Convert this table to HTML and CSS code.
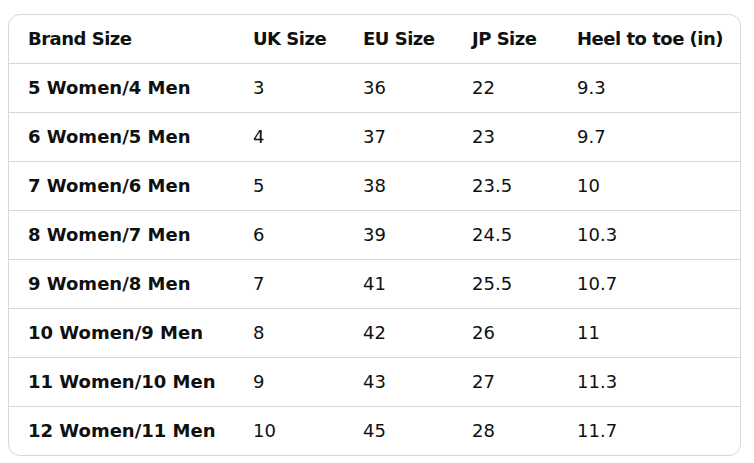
FILE: index.html
```html
<!DOCTYPE html>
<html>
<head>
<meta charset="utf-8">
<link rel="stylesheet" href="styles.css">
</head>
<body>
<div class="wrap">
<table class="size-table">
<colgroup>
<col class="c1"><col class="c2"><col class="c3"><col class="c4"><col class="c5">
</colgroup>
<thead>
<tr><th>Brand Size</th><th>UK Size</th><th>EU Size</th><th>JP Size</th><th>Heel to toe (in)</th></tr>
</thead>
<tbody>
<tr><th>5 Women/4 Men</th><td>3</td><td>36</td><td>22</td><td>9.3</td></tr>
<tr><th>6 Women/5 Men</th><td>4</td><td>37</td><td>23</td><td>9.7</td></tr>
<tr><th>7 Women/6 Men</th><td>5</td><td>38</td><td>23.5</td><td>10</td></tr>
<tr><th>8 Women/7 Men</th><td>6</td><td>39</td><td>24.5</td><td>10.3</td></tr>
<tr><th>9 Women/8 Men</th><td>7</td><td>41</td><td>25.5</td><td>10.7</td></tr>
<tr><th>10 Women/9 Men</th><td>8</td><td>42</td><td>26</td><td>11</td></tr>
<tr><th>11 Women/10 Men</th><td>9</td><td>43</td><td>27</td><td>11.3</td></tr>
<tr><th>12 Women/11 Men</th><td>10</td><td>45</td><td>28</td><td>11.7</td></tr>
</tbody>
</table>
</div>
</body>
</html>
```
FILE: styles.css
```css
html, body {
  margin: 0;
  padding: 0;
  background: #ffffff;
}
body {
  font-family: "DejaVu Sans", "Noto Sans", sans-serif;
  color: #0f1111;
}
.wrap {
  padding: 14px 13px 8px 8px;
}
.size-table {
  width: 733px;
  table-layout: fixed;
  border-collapse: separate;
  border-spacing: 0;
  border: 1px solid #d5d9d9;
  border-radius: 12px;
  overflow: hidden;
}
.c1 { width: 225px; }
.c2 { width: 110px; }
.c3 { width: 109px; }
.c4 { width: 105px; }
.size-table th,
.size-table td {
  height: 48px;
  padding: 0 0 0 19px;
  text-align: left;
  vertical-align: middle;
  font-size: 18px;
  line-height: 24px;
  border-bottom: 1px solid #d5d9d9;
  white-space: nowrap;
}
.size-table th {
  font-weight: 700;
}
.size-table thead th {
  letter-spacing: -0.5px;
}
.size-table td {
  font-weight: 400;
}
.size-table tbody tr:last-child th,
.size-table tbody tr:last-child td {
  border-bottom: none;
}
```
